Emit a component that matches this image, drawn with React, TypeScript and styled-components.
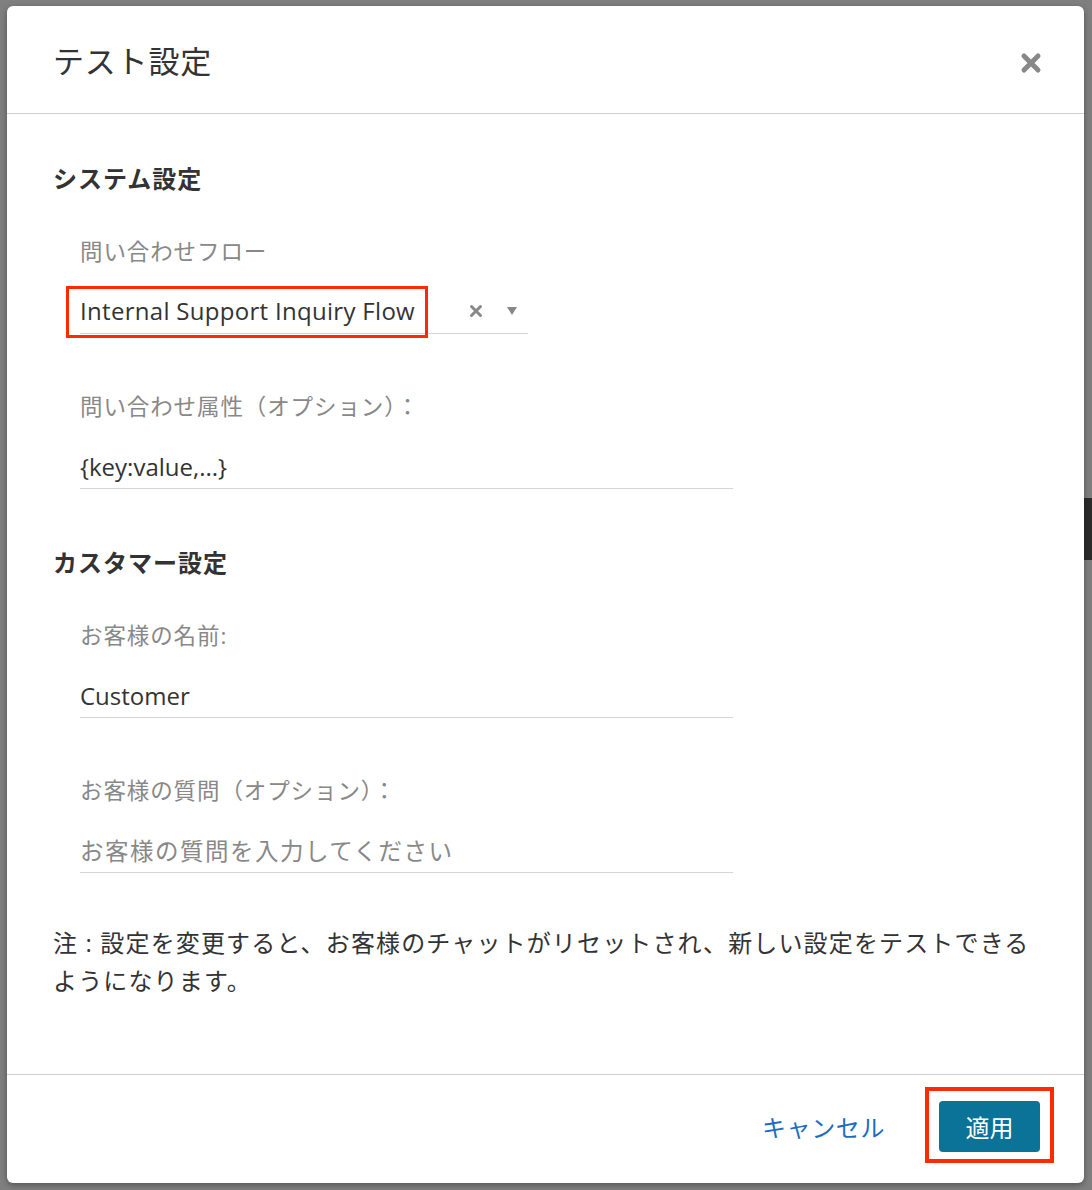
import styled, { createGlobalStyle } from 'styled-components'

const GlobalStyle = createGlobalStyle`
  html, body {
    margin: 0;
    padding: 0;
    background: #7f7f7f;
  }
  body {
    font-family: "Open Sans", "Noto Sans CJK JP", sans-serif;
    color: #333;
  }
`

const Backdrop = styled.div`
  position: relative;
  min-height: 1190px;
  padding: 6px 8px 7px 7px;
  box-sizing: border-box;
`

const BackTab = styled.div`
  position: absolute;
  right: 0;
  top: 498px;
  width: 8px;
  height: 62px;
  background: #2b2b2b;
`

const Modal = styled.div`
  position: relative;
  background: #fff;
  border-radius: 6px;
  box-shadow: 0 2px 6px rgba(0, 0, 0, 0.35);
  display: flex;
  flex-direction: column;
  height: 1177px;
`

const Header = styled.header`
  height: 107px;
  display: flex;
  align-items: center;
  justify-content: space-between;
  padding: 0 42px 0 46px;
  border-bottom: 1px solid #cfcfcf;
`

const Title = styled.h1`
  margin: 0;
  font-size: 31px;
  font-weight: 400;
  color: #333;
  letter-spacing: 0.8px;
`

const CloseButton = styled.button`
  border: 0;
  background: none;
  padding: 0;
  width: 22px;
  height: 22px;
  display: flex;
  cursor: pointer;
  margin-top: 6px;
`

const Body = styled.div`
  flex: 1;
  padding: 49px 46px 0;
`

const SectionTitle = styled.h2`
  margin: 0 0 42px;
  font-size: 24px;
  line-height: 32px;
  font-weight: 700;
  color: #333;
  letter-spacing: 1px;
`

const Field = styled.div<{ $last?: boolean }>`
  padding-left: 27px;
  margin-bottom: ${(p) => (p.$last ? '51px' : '58px')};
`

const Label = styled.div`
  font-size: 22.5px;
  line-height: 30px;
  color: #888;
  margin-bottom: 22px;
  letter-spacing: 0.9px;
`

const InputBox = styled.div<{ $width: number; $placeholder?: boolean }>`
  width: ${(p) => p.$width}px;
  height: 44px;
  border-bottom: 1px solid #d5d5d5;
  display: flex;
  align-items: center;
  font-size: ${(p) => (p.$placeholder ? '23.5px' : '24px')};
  letter-spacing: ${(p) => (p.$placeholder ? '1.5px' : '0')};
  color: ${(p) => (p.$placeholder ? '#888' : '#333')};
`

const SelectValue = styled.span`
  position: relative;
  line-height: 30px;
  letter-spacing: 0.3px;

  &::after {
    content: '';
    position: absolute;
    top: -10px;
    bottom: -12px;
    left: -14px;
    right: -13px;
    border: 3px solid #ff2a00;
  }
`

const SelectIcons = styled.div`
  margin-left: auto;
  display: flex;
  align-items: center;
  gap: 23px;
  padding-right: 10px;
`

const Note = styled.p`
  margin: 0;
  font-size: 24px;
  line-height: 38px;
  color: #333;
  letter-spacing: 1.15px;
`

const Footer = styled.footer`
  height: 109px;
  box-sizing: border-box;
  padding: 0 44px 6px 0;
  border-top: 1px solid #cfcfcf;
  display: flex;
  align-items: center;
  justify-content: flex-end;
  gap: 54px;
`

const CancelLink = styled.a`
  font-size: 24px;
  color: #1a6dc0;
  text-decoration: none;
  cursor: pointer;
  letter-spacing: 0.6px;
`

const ApplyButton = styled.button`
  position: relative;
  width: 101px;
  height: 51px;
  border: 0;
  border-radius: 4px;
  background: #0b7397;
  color: #fff;
  font-family: inherit;
  font-size: 24px;
  cursor: pointer;

  &::after {
    content: '';
    position: absolute;
    top: -14px;
    bottom: -11px;
    left: -14px;
    right: -14px;
    border: 4px solid #ff2a00;
  }
`

function CloseIcon() {
  return (
    <svg width="22" height="22" viewBox="0 0 22 22">
      <path d="M4 4 L18 18 M18 4 L4 18" stroke="#888" strokeWidth="5" strokeLinecap="round" />
    </svg>
  )
}

export default function App() {
  return (
    <>
      <GlobalStyle />
      <Backdrop>
        <BackTab />
        <Modal>
          <Header>
            <Title>テスト設定</Title>
            <CloseButton aria-label="close">
              <CloseIcon />
            </CloseButton>
          </Header>
          <Body>
            <SectionTitle>システム設定</SectionTitle>
            <Field>
              <Label>問い合わせフロー</Label>
              <InputBox $width={448}>
                <SelectValue>Internal Support Inquiry Flow</SelectValue>
                <SelectIcons>
                  <svg width="14" height="14" viewBox="0 0 14 14">
                    <path d="M2.5 2.5 L11.5 11.5 M11.5 2.5 L2.5 11.5" stroke="#888" strokeWidth="3" strokeLinecap="round" />
                  </svg>
                  <svg width="12" height="10" viewBox="0 0 12 10">
                    <path d="M1 1 L11 1 L6 9 Z" fill="#888" />
                  </svg>
                </SelectIcons>
              </InputBox>
            </Field>
            <Field>
              <Label>問い合わせ属性（オプション）：</Label>
              <InputBox $width={653}>{'{key:value,...}'}</InputBox>
            </Field>
            <SectionTitle>カスタマー設定</SectionTitle>
            <Field>
              <Label>お客様の名前:</Label>
              <InputBox $width={653}>Customer</InputBox>
            </Field>
            <Field $last>
              <Label>お客様の質問（オプション）：</Label>
              <InputBox $width={653} $placeholder>
                お客様の質問を入力してください
              </InputBox>
            </Field>
            <Note>
              注 : 設定を変更すると、お客様のチャットがリセットされ、新しい設定をテストできるようになります。
            </Note>
          </Body>
          <Footer>
            <CancelLink>キャンセル</CancelLink>
            <ApplyButton>適用</ApplyButton>
          </Footer>
        </Modal>
      </Backdrop>
    </>
  )
}
